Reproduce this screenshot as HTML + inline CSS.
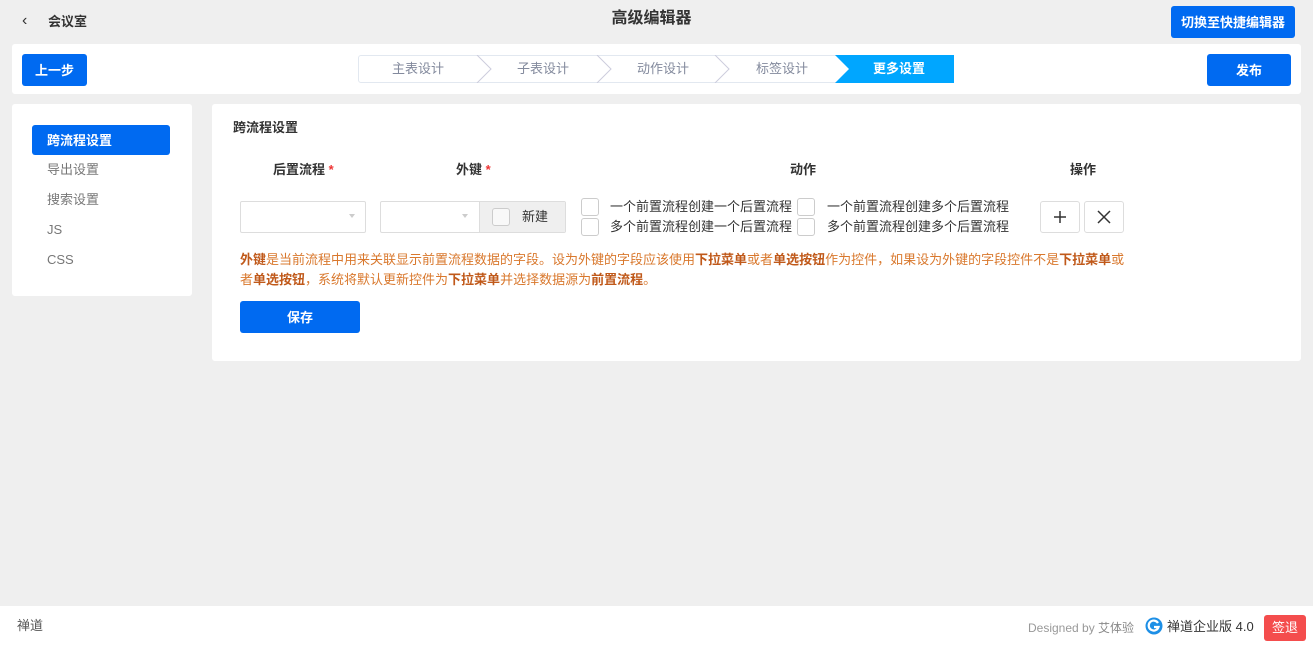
<!DOCTYPE html>
<html><head><meta charset="utf-8"><style>
*{box-sizing:border-box;margin:0;padding:0}
body{width:1313px;height:645px;background:#efefef;font-family:"Liberation Sans","Noto Sans CJK SC",sans-serif;font-size:13px;color:#333;position:relative;overflow:hidden;line-height:17px}
.a{position:absolute}
.btn{background:#006af1;color:#fff;border-radius:3px;font-weight:bold;font-size:13px;display:flex;align-items:center;justify-content:center;line-height:1}
.cb{position:absolute;width:18px;height:18px;border:1px solid #ccc;border-radius:3px;background:#fff}
.step{position:absolute;top:0;height:28px;line-height:26px;text-align:center;color:#838a9d;font-size:13px}
b.o{color:#c0591a}
.side{position:absolute;left:47px;color:#777;line-height:14px}
</style></head><body>
<div class="a" style="left:22px;top:12px;font-size:16px;color:#333">‹</div>
<div class="a" style="left:48px;top:13px;font-weight:bold;font-size:13px">会议室</div>
<div class="a" style="left:0;width:1303px;top:10px;text-align:center;font-weight:bold;font-size:16px;color:#333">高级编辑器</div>
<div class="a btn" style="left:1171px;top:6px;width:124px;height:32px">切换至快捷编辑器</div>

<div class="a" style="left:12px;top:44px;width:1289px;height:50px;background:#fff;border-radius:3px"></div>
<div class="a btn" style="left:22px;top:54px;width:65px;height:32px">上一步</div>
<div class="a btn" style="left:1207px;top:54px;width:84px;height:32px">发布</div>
<div class="a" style="left:358px;top:55px;width:595px;height:28px;border:1px solid #e2e8f0;border-radius:3px;background:#fff">
<svg class="a" style="left:0;top:-1px" width="595" height="28"><g fill="none" stroke="#ccd" stroke-width="1"><path d="M118 0 L132 14 L118 28M238 0 L252 14 L238 28M356 0 L370 14 L356 28"/></g><path d="M476 0 L595 0 L595 28 L476 28 L490 14Z" fill="#00a6ff"/></svg>
<div class="step" style="left:0;width:118px">主表设计</div>
<div class="step" style="left:125px;width:118px">子表设计</div>
<div class="step" style="left:245px;width:118px">动作设计</div>
<div class="step" style="left:364px;width:118px">标签设计</div>
<div class="step" style="left:485px;width:110px;color:#fff;font-weight:bold">更多设置</div>
</div>

<div class="a" style="left:12px;top:104px;width:180px;height:192px;background:#fff;border-radius:3px"></div>
<div class="a btn" style="left:32px;top:125px;width:138px;height:30px;justify-content:flex-start;padding-left:15px">跨流程设置</div>
<div class="side" style="top:163px">导出设置</div>
<div class="side" style="top:193px">搜索设置</div>
<div class="side" style="top:223px">JS</div>
<div class="side" style="top:253px">CSS</div>

<div class="a" style="left:212px;top:104px;width:1089px;height:257px;background:#fff;border-radius:3px"></div>
<div class="a" style="left:233px;top:119px;font-weight:bold">跨流程设置</div>
<div class="a" style="left:273px;top:161px;font-weight:bold">后置流程 <span style="color:#e33">*</span></div>
<div class="a" style="left:456px;top:161px;font-weight:bold">外键 <span style="color:#e33">*</span></div>
<div class="a" style="left:790px;top:161px;font-weight:bold">动作</div>
<div class="a" style="left:1070px;top:161px;font-weight:bold">操作</div>

<div class="a" style="left:240px;top:201px;width:126px;height:32px;border:1px solid #ddd;border-radius:2px"></div>
<div class="a" style="left:349px;top:214px;border:3px solid transparent;border-top:4px solid #ccc"></div>
<div class="a" style="left:380px;top:201px;width:186px;height:32px;border:1px solid #ddd;border-radius:2px"></div>
<div class="a" style="left:462px;top:214px;border:3px solid transparent;border-top:4px solid #ccc"></div>
<div class="a" style="left:479px;top:202px;width:86px;height:30px;background:#efefef;border-left:1px solid #ddd"></div>
<div class="cb" style="left:492px;top:208px;background:#f8f8f8"></div>
<div class="a" style="left:522px;top:208px">新建</div>

<div class="cb" style="left:581px;top:198px"></div>
<div class="cb" style="left:581px;top:218px"></div>
<div class="a" style="left:610px;top:198px">一个前置流程创建一个后置流程</div>
<div class="a" style="left:610px;top:218px">多个前置流程创建一个后置流程</div>
<div class="cb" style="left:797px;top:198px"></div>
<div class="cb" style="left:797px;top:218px"></div>
<div class="a" style="left:827px;top:198px">一个前置流程创建多个后置流程</div>
<div class="a" style="left:827px;top:218px">多个前置流程创建多个后置流程</div>

<div class="a" style="left:1040px;top:201px;width:40px;height:32px;border:1px solid #ddd;border-radius:3px"><svg width="38" height="30"><path d="M19 9 V21 M13 15 H25" stroke="#333" stroke-width="1.5"/></svg></div>
<div class="a" style="left:1084px;top:201px;width:40px;height:32px;border:1px solid #ddd;border-radius:3px"><svg width="38" height="30"><path d="M13 9 L25 21 M25 9 L13 21" stroke="#333" stroke-width="1.5"/></svg></div>

<div class="a" style="left:240px;top:250px;width:888px;line-height:20px;color:#d9782d"><b class="o">外键</b>是当前流程中用来关联显示前置流程数据的字段。设为外键的字段应该使用<b class="o">下拉菜单</b>或者<b class="o">单选按钮</b>作为控件，如果设为外键的字段控件不是<b class="o">下拉菜单</b>或者<b class="o">单选按钮</b>，系统将默认更新控件为<b class="o">下拉菜单</b>并选择数据源为<b class="o">前置流程</b>。</div>
<div class="a btn" style="left:240px;top:301px;width:120px;height:32px">保存</div>

<div class="a" style="left:0;top:606px;width:1313px;height:39px;background:#fff"></div>
<div class="a" style="left:17px;top:617px;color:#555">禅道</div>
<div class="a" style="left:1028px;top:620px;font-size:12px;color:#999">Designed by <span style="color:#888">艾体验</span></div>
<svg class="a" style="left:1145px;top:617px" width="18" height="18"><circle cx="9" cy="9" r="8.5" fill="#1d8fe6"/><path d="M13 6 A5 5 0 1 0 13.5 10 L9 10" stroke="#fff" stroke-width="2.2" fill="none"/></svg>
<div class="a" style="left:1167px;top:618px;font-size:13px;color:#333">禅道企业版 4.0</div>
<div class="a" style="left:1264px;top:615px;width:42px;height:26px;background:#f44d4d;color:#fff;border-radius:3px;text-align:center;line-height:25px;font-size:13px">签退</div>
</body></html>
